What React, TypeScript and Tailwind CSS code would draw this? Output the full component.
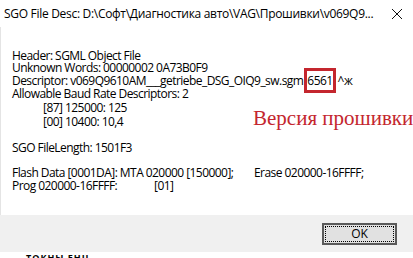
import React from "react";

const font = { fontFamily: '"Open Sans", "Noto Sans", sans-serif' };

export default function App() {
  return (
    <div className="w-[413px] h-[258px] bg-white overflow-hidden flex flex-col text-black text-[12px] leading-[13px]" style={font}>
      <div className="h-[27px] flex items-center justify-between pl-[4px] pr-[10px] shrink-0">
        <span className="whitespace-nowrap tracking-[-0.3px]">SGO File Desc: D:\Софт\Диагностика авто\VAG\Прошивки\v069Q9...</span>
        <svg width="12" height="12" viewBox="0 0 12 12" className="shrink-0">
          <path d="M1 1 L11 11 M11 1 L1 11" stroke="#111" strokeWidth="1" />
        </svg>
      </div>
      <div className="h-[188px] shrink-0 border-l border-[#e4e4e4] pl-[11px] pt-[23px] relative tracking-[-0.55px]">
        <div className="h-[12px] leading-[12px]">Header: SGML Object File</div>
        <div className="h-[12px] leading-[12px]">Unknown Words: 00000002 0A73B0F9</div>
        <div className="h-[13px] whitespace-nowrap flex items-center">
          <span>Descriptor: v069Q9610AM___getriebe_DSG_OIQ9_sw.sgm</span>
          <span className="border-[3px] border-[#c4262e] px-0 -my-[6px] py-[3px] ml-[1px] leading-[13px]">6561</span>
          <span className="ml-[2px]">^ж</span>
        </div>
        <div className="h-[14px] leading-[14px]">Allowable Baud Rate Descriptors: 2</div>
        <div className="h-[14px] leading-[14px] pl-[31px]">[87] 125000: 125</div>
        <div className="h-[14px] leading-[14px] pl-[31px]">[00] 10400: 10,4</div>
        <div className="h-[26px] pt-[12px] leading-[14px]">SGO FileLength: 1501F3</div>
        <div className="h-[13px] mt-[11px] flex whitespace-nowrap">
          <span className="w-[242px] shrink-0">Flash Data [0001DA]: MTA 020000 [150000];</span>
          <span>Erase 020000-16FFFF;</span>
        </div>
        <div className="h-[13px] flex whitespace-nowrap">
          <span className="w-[142px] shrink-0">Prog 020000-16FFFF:</span>
          <span>[01]</span>
        </div>
        <div
          className="absolute left-[252px] top-[79px] text-[#c4262e] text-[21px] leading-[24px] whitespace-nowrap tracking-normal"
          style={{ fontFamily: '"Liberation Serif", "DejaVu Serif", serif' }}
        >
          Версия прошивки
        </div>
      </div>
      <div className="h-[37px] bg-[#f0f0f0] flex items-center justify-end pr-[16px] shrink-0">
        <div className="w-[75px] h-[22px] border-2 border-[#5a5a5a] bg-[#e1e1e1] p-[1px]">
          <div className="w-full h-full border border-dotted border-black flex items-center justify-center">OK</div>
        </div>
      </div>
      <div className="h-[6px] bg-white shrink-0 overflow-hidden pl-[26px]">
        <span className="block text-[9px] leading-[12px] font-bold tracking-[1px]">ТОКНЫ ЕНЦ</span>
      </div>
    </div>
  );
}
